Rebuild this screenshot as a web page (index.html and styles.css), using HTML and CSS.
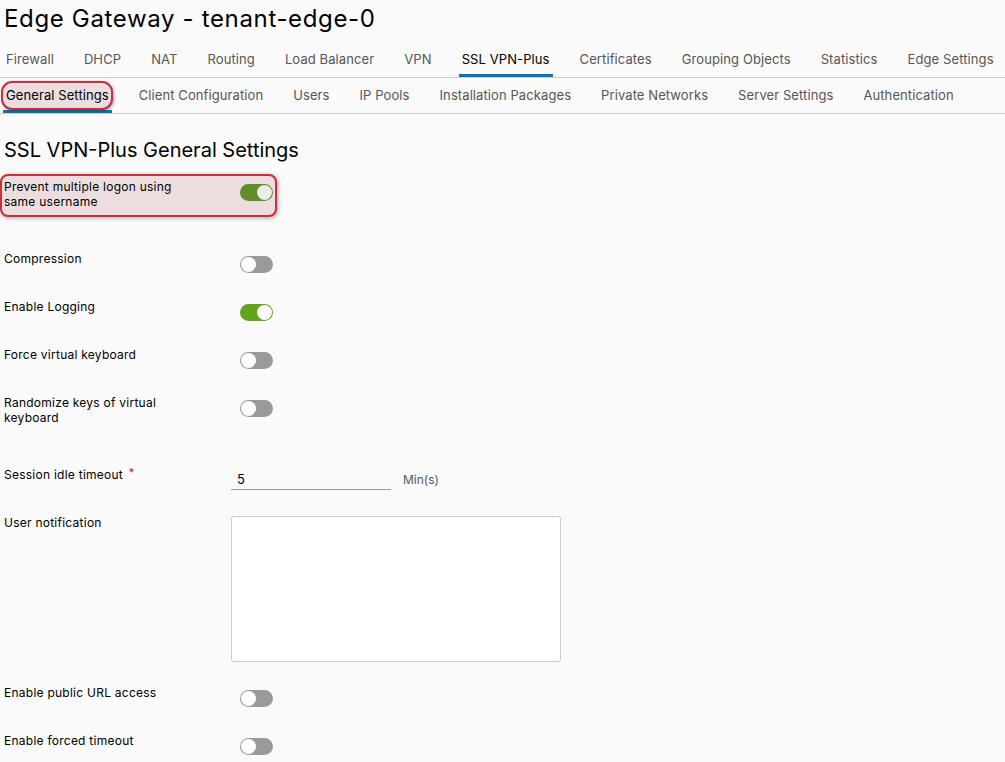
FILE: index.html
```html
<!DOCTYPE html>
<html>
<head>
<meta charset="utf-8">
<link rel="stylesheet" href="styles.css">
</head>
<body>
<h1 class="title">Edge Gateway - tenant-edge-0</h1>
<nav class="tabs main-tabs">
  <span class="tab">Firewall</span>
  <span class="tab">DHCP</span>
  <span class="tab">NAT</span>
  <span class="tab">Routing</span>
  <span class="tab">Load Balancer</span>
  <span class="tab">VPN</span>
  <span class="tab active">SSL VPN-Plus</span>
  <span class="tab">Certificates</span>
  <span class="tab">Grouping Objects</span>
  <span class="tab">Statistics</span>
  <span class="tab">Edge Settings</span>
</nav>
<nav class="tabs sub-tabs">
  <span class="tab active marked"><span class="mark">General Settings</span></span>
  <span class="tab">Client Configuration</span>
  <span class="tab">Users</span>
  <span class="tab">IP Pools</span>
  <span class="tab">Installation Packages</span>
  <span class="tab">Private Networks</span>
  <span class="tab">Server Settings</span>
  <span class="tab">Authentication</span>
</nav>
<h2 class="section-title">SSL VPN-Plus General Settings</h2>
<form class="form">
  <div class="row tall highlight">
    <label class="lbl">Prevent multiple logon using<br>same username</label>
    <span class="toggle on"></span>
  </div>
  <div class="row">
    <label class="lbl">Compression</label>
    <span class="toggle"></span>
  </div>
  <div class="row">
    <label class="lbl">Enable Logging</label>
    <span class="toggle on"></span>
  </div>
  <div class="row">
    <label class="lbl">Force virtual keyboard</label>
    <span class="toggle"></span>
  </div>
  <div class="row tall">
    <label class="lbl">Randomize keys of virtual<br>keyboard</label>
    <span class="toggle"></span>
  </div>
  <div class="row">
    <label class="lbl">Session idle timeout <span class="req">*</span></label>
    <div class="input-wrap">
      <span class="text-input">5</span>
      <span class="unit">Min(s)</span>
    </div>
  </div>
  <div class="row area-row">
    <label class="lbl">User notification</label>
    <div class="textarea"></div>
  </div>
  <div class="row">
    <label class="lbl">Enable public URL access</label>
    <span class="toggle"></span>
  </div>
  <div class="row">
    <label class="lbl">Enable forced timeout</label>
    <span class="toggle"></span>
  </div>
</form>
</body>
</html>
```
FILE: styles.css
```css
html, body {
  margin: 0;
  padding: 0;
  background: #fafafa;
  font-family: "Inter", "Open Sans", "Liberation Sans", sans-serif;
  color: #000;
  overflow: hidden;
}

.title {
  margin: 0;
  padding-left: 4px;
  font-size: 24px;
  font-weight: 400;
  line-height: 38px;
  letter-spacing: 0.65px;
  color: #000;
}

.tabs {
  display: flex;
  gap: 24px;
  padding-left: 3px;
  border-bottom: 1px solid #ccc;
  font-size: 13px;
  letter-spacing: 0.1px;
}

.main-tabs {
  margin-top: 3px;
  height: 36px;
}

.sub-tabs {
  height: 35px;
  letter-spacing: 0.09px;
}

.tab {
  display: flex;
  align-items: center;
  padding: 0 3px;
  color: #565656;
  border-bottom: 3px solid transparent;
  box-sizing: border-box;
  padding-top: 2px;
  white-space: nowrap;
}

.tab.active {
  color: #000;
  border-bottom-color: #0079b8;
}

.marked {
  position: relative;
  z-index: 0;
}

.mark {
  position: relative;
}

.mark::before {
  content: "";
  position: absolute;
  left: -5px;
  right: -4px;
  top: -6px;
  bottom: -7px;
  border: 2px solid #c92f3f;
  border-radius: 11px;
  background: #ecdedf;
  box-shadow: 1px 1px 3px rgba(0, 0, 0, 0.35);
  z-index: -1;
}

.section-title {
  margin: 22px 0 0 0;
  padding-left: 4px;
  font-size: 20px;
  font-weight: 400;
  line-height: 28px;
  color: #000;
}

.form {
  padding-left: 4px;
  margin-top: 17px;
}

.row {
  display: flex;
  align-items: flex-start;
  min-height: 24px;
  margin-bottom: 24px;
}

.row.tall {
  min-height: 48px;
}

.lbl {
  width: 227px;
  flex: none;
  font-size: 12px;
  line-height: 15px;
  letter-spacing: 0.25px;
  color: #000;
}

.req {
  color: #c92100;
  margin-left: 2px;
  vertical-align: top;
  font-size: 11px;
  line-height: 11px;
}

.row.tall.highlight {
  margin-left: -4px;
  width: 277px;
  box-sizing: border-box;
  min-height: 43px;
  padding: 3px 0 0 2px;
  border: 2px solid #c92f3f;
  border-radius: 8px;
  background: #ecdedf;
  box-shadow: 1px 1px 4px rgba(0, 0, 0, 0.35);
  margin-top: -7px;
  margin-bottom: 34px;
}

.toggle {
  position: relative;
  flex: none;
  margin-left: 9px;
  margin-top: 5px;
  width: 33px;
  height: 17px;
  border-radius: 9px;
  background: #9a9a9a;
  box-sizing: border-box;
}

.toggle::after {
  content: "";
  position: absolute;
  left: 1px;
  top: 1px;
  width: 15px;
  height: 15px;
  border-radius: 50%;
  background: #fff;
}

.toggle.on {
  background: #62a420;
}

.toggle.on::after {
  left: 17px;
}

.highlight .toggle.on {
  background: #5e8e28;
}

.highlight .toggle.on::after {
  background: #ecebe6;
}

.input-wrap {
  display: flex;
  align-items: flex-end;
  margin-top: 2px;
}

.text-input {
  display: block;
  width: 154px;
  height: 20px;
  padding-left: 6px;
  border-bottom: 1px solid #9a9a9a;
  font-size: 13px;
  line-height: 20px;
  color: #000;
}

.unit {
  margin-left: 12px;
  font-size: 12px;
  line-height: 20px;
  color: #565656;
}

.area-row {
  margin-bottom: 23px;
}

.textarea {
  margin-top: 1px;
  width: 328px;
  height: 144px;
  border: 1px solid #ccc;
  border-radius: 3px;
  background: #fff;
}
```
